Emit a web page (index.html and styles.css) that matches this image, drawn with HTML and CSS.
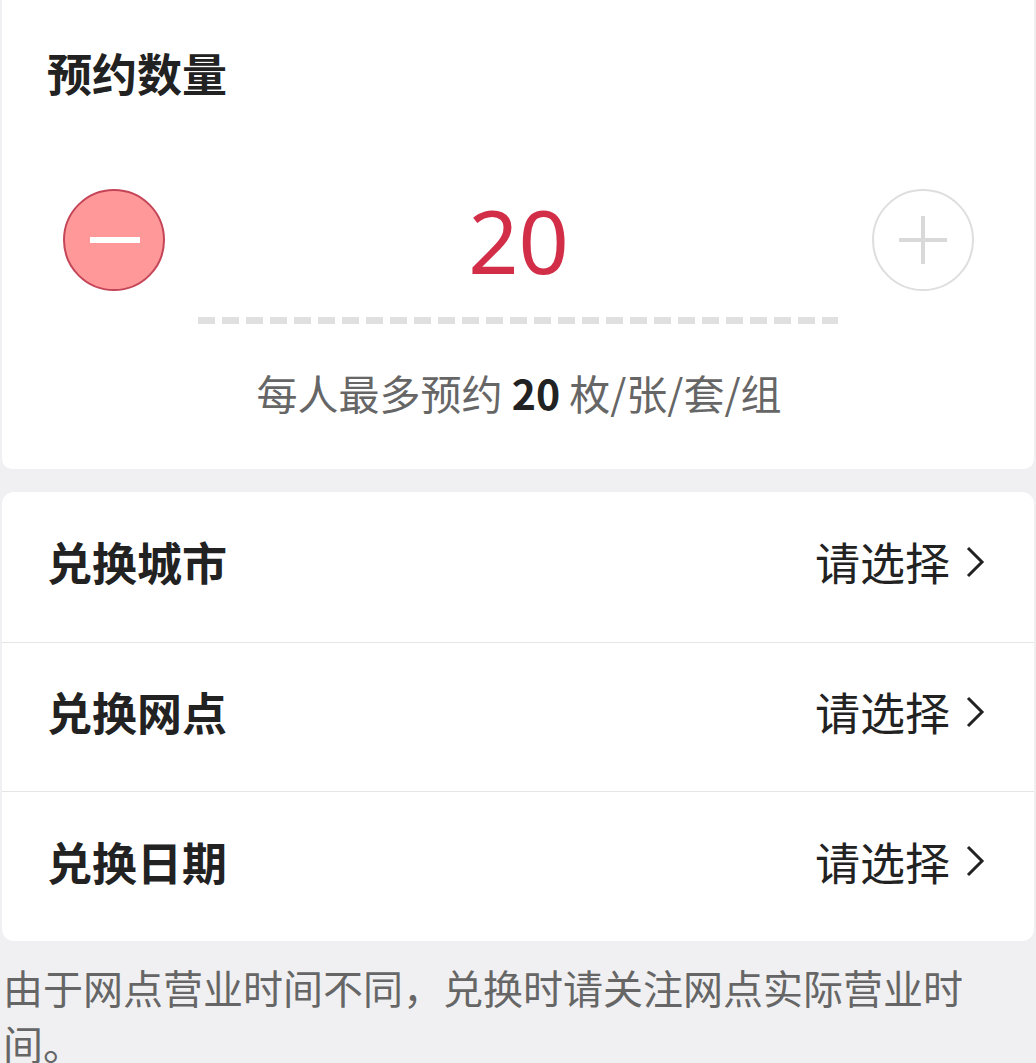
FILE: index.html
```html
<!DOCTYPE html>
<html lang="zh-CN">
<head>
<meta charset="utf-8">
<title>预约数量</title>
<link rel="stylesheet" href="styles.css">
</head>
<body>
<div class="page">
  <section class="card qty-card">
    <h2 class="qty-title">预约数量</h2>
    <div class="stepper">
      <button class="step step-minus" aria-label="减少">
        <svg width="102" height="102" viewBox="0 0 102 102"><circle cx="51" cy="51" r="50" fill="#ff9999" stroke="#c54558" stroke-width="2"/><rect x="27" y="48" width="50" height="6" fill="#fff"/></svg>
      </button>
      <div class="qty-value">20</div>
      <button class="step step-plus" aria-label="增加">
        <svg width="102" height="102" viewBox="0 0 102 102"><circle cx="51" cy="51" r="50" fill="#fff" stroke="#dedede" stroke-width="2"/><rect x="27" y="49" width="48" height="4" fill="#d9d9d9"/><rect x="49" y="27" width="4" height="48" fill="#d9d9d9"/></svg>
      </button>
    </div>
    <div class="dash"></div>
    <p class="qty-limit">每人最多预约 <b>20</b> 枚/张/套/组</p>
  </section>

  <section class="card list-card">
    <div class="row">
      <span class="row-label">兑换城市</span>
      <span class="row-value">请选择<svg class="chev" width="20" height="32" viewBox="0 0 20 32"><path d="M3 2 L17 16 L3 30" fill="none" stroke="#222" stroke-width="3"/></svg></span>
    </div>
    <div class="row">
      <span class="row-label">兑换网点</span>
      <span class="row-value">请选择<svg class="chev" width="20" height="32" viewBox="0 0 20 32"><path d="M3 2 L17 16 L3 30" fill="none" stroke="#222" stroke-width="3"/></svg></span>
    </div>
    <div class="row">
      <span class="row-label">兑换日期</span>
      <span class="row-value">请选择<svg class="chev" width="20" height="32" viewBox="0 0 20 32"><path d="M3 2 L17 16 L3 30" fill="none" stroke="#222" stroke-width="3"/></svg></span>
    </div>
  </section>

  <p class="note">由于网点营业时间不同，兑换时请关注网点实际营业时间。</p>
</div>
</body>
</html>
```

FILE: styles.css
```css
* { box-sizing: border-box; }
html, body {
  margin: 0;
  padding: 0;
  background: #f0f0f2;
  font-family: "Noto Sans CJK SC", "Noto Sans", sans-serif;
  color: #222;
}
.page {
  padding: 0 2px;
}
.card {
  background: #fff;
}
.qty-card {
  height: 469px;
  border-radius: 0 0 10px 10px;
  padding-top: 46px;
}
.qty-title {
  margin: 0 0 0 45px;
  font-size: 45px;
  line-height: 54px;
  font-weight: 700;
  color: #222;
}
.stepper {
  display: flex;
  align-items: center;
  justify-content: space-between;
  padding: 0 60px 0 61px;
  margin-top: 88px;
  height: 104px;
}
.step {
  width: 102px;
  height: 102px;
  padding: 0;
  border: 0;
  background: none;
  display: block;
}
.step svg { display: block; }
.qty-value {
  font-family: "Noto Sans", "Open Sans", sans-serif;
  font-size: 88px;
  line-height: 104px;
  color: #d22e48;
  font-weight: 400;
}
.dash {
  margin: 25px 0 0 196px;
  width: 640px;
  height: 7px;
  background: repeating-linear-gradient(90deg, #e0e0e0 0 17px, transparent 17px 24px);
}
.qty-limit {
  margin: 44px 0 0;
  text-align: center;
  font-size: 41px;
  line-height: 48px;
  color: #666;
  padding-left: 2px;
}
.qty-limit b {
  color: #222;
  font-weight: 700;
}
.list-card {
  margin-top: 23px;
  border-radius: 12px;
}
.row {
  height: 149.5px;
  display: flex;
  align-items: center;
  justify-content: space-between;
  padding: 0 49px 10px 45px;
  border-top: 1px solid #e6e6e6;
}
.row:first-child { border-top: 0; }
.row-label {
  font-size: 45px;
  font-weight: 700;
  color: #222;
}
.row-value {
  display: flex;
  align-items: center;
  font-size: 45px;
  color: #222;
}
.chev {
  margin-left: 15px;
  display: block;
}
.note {
  margin: 18px 0 0 0;
  padding: 0 40px 0 1px;
  font-size: 40px;
  line-height: 56px;
  color: #666;
}
```
